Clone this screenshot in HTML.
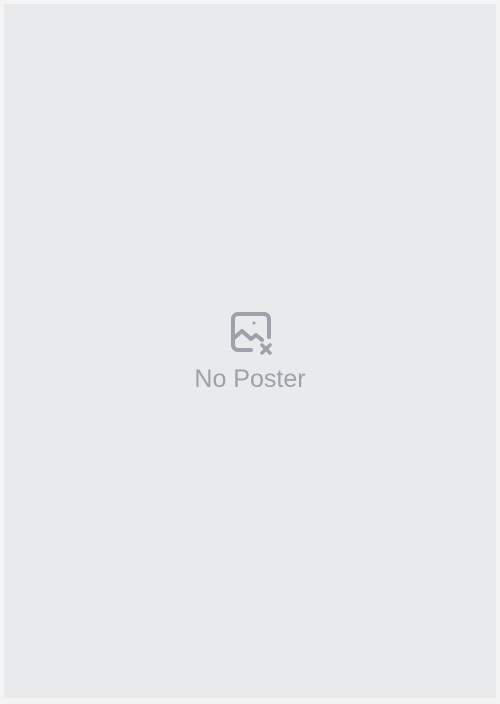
<!DOCTYPE html>
<html><head><style>
html,body{margin:0;padding:0;}
body{width:500px;height:704px;background:#f4f4f5;position:relative;overflow:hidden;}
.box{position:absolute;left:4px;top:4px;width:492px;height:694px;background:#e9eaec;}
svg{position:absolute;left:229px;top:310px;}
.t{position:absolute;left:0;width:500px;top:365px;text-align:center;font-family:"Liberation Sans",sans-serif;font-size:25px;line-height:28px;color:#9fa0aa;}
</style></head><body>
<div class="box"></div>
<svg width="46" height="46" viewBox="0 0 46 46" fill="none" stroke="#9fa0aa" stroke-width="4" stroke-linecap="round" stroke-linejoin="round">
<path d="M22 40H9a5 5 0 0 1-5-5V9a5 5 0 0 1 5-5h26a5 5 0 0 1 5 5v18"/>
<path d="M5 28l8-7 9 8 5-4 6 5"/>
<circle cx="25" cy="13" r="1.5" fill="#9fa0aa" stroke="none"/>
<path d="M33 35l8 8M41 35l-8 8" stroke-width="3.5"/>
</svg>
<div class="t">No Poster</div>
</body></html>
